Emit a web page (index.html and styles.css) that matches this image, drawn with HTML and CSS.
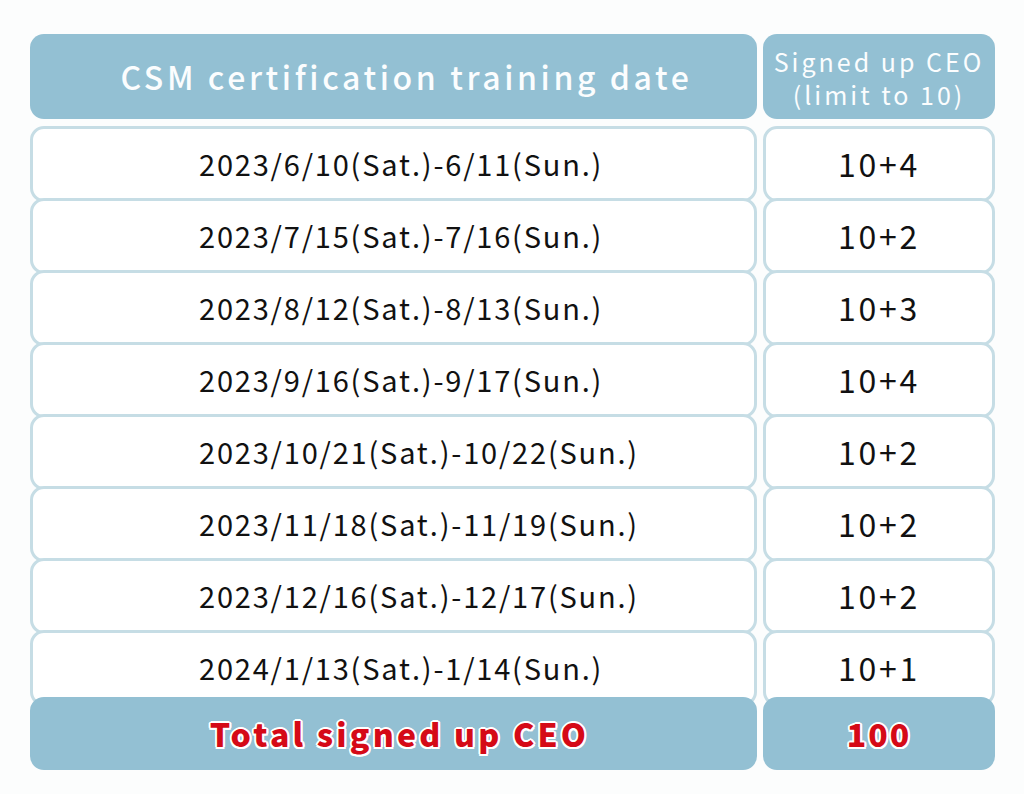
FILE: index.html
```html
<!DOCTYPE html>
<html lang="en">
<head>
<meta charset="utf-8">
<title>CSM certification training</title>
<link rel="stylesheet" href="styles.css">
</head>
<body>
<div class="table">
  <div class="row head">
    <div class="cell hd-main">CSM certification training date</div>
    <div class="cell hd-side">Signed up CEO<br>(limit to 10)</div>
  </div>
  <div class="body">
    <div class="row item"><div class="cell date">2023/6/10(Sat.)-6/11(Sun.)</div><div class="cell num">10+4</div></div>
    <div class="row item"><div class="cell date">2023/7/15(Sat.)-7/16(Sun.)</div><div class="cell num">10+2</div></div>
    <div class="row item"><div class="cell date">2023/8/12(Sat.)-8/13(Sun.)</div><div class="cell num">10+3</div></div>
    <div class="row item"><div class="cell date">2023/9/16(Sat.)-9/17(Sun.)</div><div class="cell num">10+4</div></div>
    <div class="row item"><div class="cell date">2023/10/21(Sat.)-10/22(Sun.)</div><div class="cell num">10+2</div></div>
    <div class="row item"><div class="cell date">2023/11/18(Sat.)-11/19(Sun.)</div><div class="cell num">10+2</div></div>
    <div class="row item"><div class="cell date">2023/12/16(Sat.)-12/17(Sun.)</div><div class="cell num">10+2</div></div>
    <div class="row item"><div class="cell date">2024/1/13(Sat.)-1/14(Sun.)</div><div class="cell num">10+1</div></div>
    <div class="row total">
      <div class="cell tot-label">Total signed up CEO</div>
      <div class="cell tot-num">100</div>
    </div>
  </div>
</div>
</body>
</html>
```
FILE: styles.css
```css
html, body {
  margin: 0;
  padding: 0;
  background: #fcfdfd;
}
body {
  font-family: "Noto Sans CJK JP", "Noto Sans", sans-serif;
  color: #111;
}
.table {
  width: 965px;
  padding: 34px 0 0 30px;
}
.row {
  display: grid;
  grid-template-columns: 727px 232px;
  column-gap: 6px;
}
.cell {
  display: flex;
  align-items: center;
  justify-content: center;
  text-align: center;
  box-sizing: border-box;
}
.head {
  height: 85px;
}
.head .cell {
  background: #93c0d3;
  border-radius: 14px;
  color: #fbfdfe;
}
.hd-main {
  font-size: 32px;
  font-weight: 500;
  letter-spacing: 3.6px;
  padding-left: 26px;
  padding-bottom: 2px;
}
.hd-side {
  font-size: 25px;
  line-height: 33px;
  letter-spacing: 3px;
  padding-top: 2px;
}
.body {
  margin-top: 7px;
  display: flex;
  flex-direction: column;
}
.item {
  height: 76px;
}
.item + .item {
  margin-top: -4px;
}
.item .cell {
  background: #fff;
  border: 3px solid #c6dde5;
  border-radius: 14px;
  padding-bottom: 2px;
}
.item .date {
  justify-content: flex-start;
  font-size: 29px;
  letter-spacing: 1.8px;
  padding-left: 166px;
}
.num {
  font-size: 32px;
  letter-spacing: 2.7px;
}
.total {
  height: 73px;
  margin-top: -9px;
}
.total .cell {
  background: #93c0d3;
  border-radius: 14px;
  color: #d50a17;
  font-weight: 900;
  padding-bottom: 1px;
  text-shadow:
    2px 0 0 #fff, -2px 0 0 #fff, 0 2px 0 #fff, 0 -2px 0 #fff,
    1.5px 1.5px 0 #fff, -1.5px 1.5px 0 #fff, 1.5px -1.5px 0 #fff, -1.5px -1.5px 0 #fff;
}
.tot-label {
  font-size: 32px;
  letter-spacing: 3.2px;
  padding-left: 12px;
}
.tot-num {
  font-size: 32px;
  letter-spacing: 2px;
}
```
